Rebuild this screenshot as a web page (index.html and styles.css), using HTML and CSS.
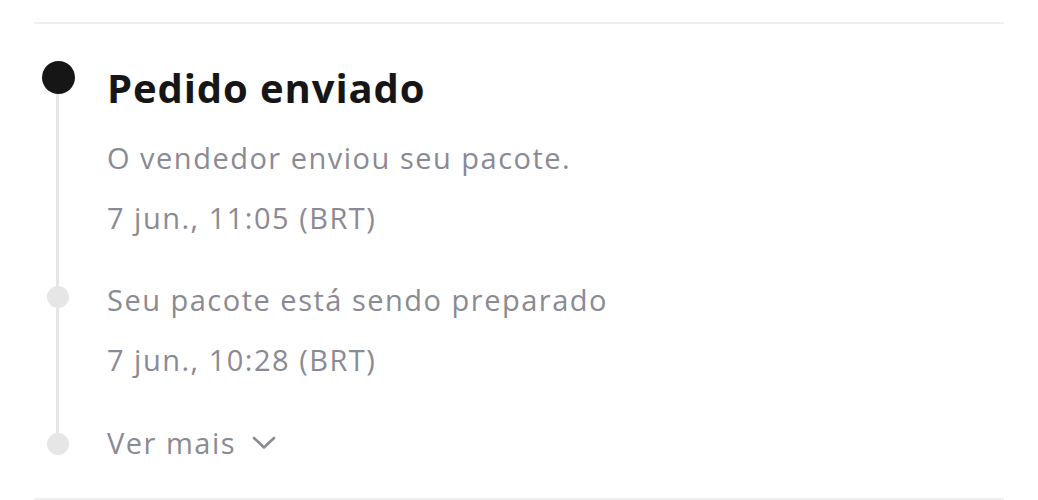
FILE: index.html
```html
<!DOCTYPE html>
<html lang="pt-BR">

<head>
  <title>rastreamento do pedido</title>
  <meta name="viewport" content="width=device-width, initial-scale=1" />
  <meta charset="UTF-8" />
  <link rel="stylesheet" href="styles.css">
</head>

<body>
  <section class="tracking">
    <ul class="timeline">
      <li class="step current">
        <span class="dot"></span>
        <div class="info">
          <h2 class="title">Pedido enviado</h2>
          <p class="text">O vendedor enviou seu pacote.</p>
          <p class="text">7 jun., 11:05 (BRT)</p>
        </div>
      </li>
      <li class="step">
        <span class="dot"></span>
        <div class="info">
          <p class="text">Seu pacote está sendo preparado</p>
          <p class="text">7 jun., 10:28 (BRT)</p>
        </div>
      </li>
      <li class="step more">
        <span class="dot"></span>
        <div class="info">
          <a class="see-more" href="#">Ver mais
            <svg width="24" height="14" viewBox="0 0 24 14">
              <path d="M2 2 L12 11.5 L22 2" fill="none" stroke="#8a8a94" stroke-width="2.6" stroke-linecap="round" stroke-linejoin="round" />
            </svg>
          </a>
        </div>
      </li>
    </ul>
  </section>
</body>

</html>
```

FILE: styles.css
```css
body {
  margin: 0;
  background-color: #ffffff;
  font-family: 'Open Sans', Lato, sans-serif;
}

.tracking {
  width: 970px;
  margin: 22px 0 0 34px;
  border-top: 2px solid #f0f0f0;
  border-bottom: 2px solid #f0f0f0;
  height: 474px;
}

.timeline {
  position: relative;
  list-style: none;
  margin: 0;
  padding: 40px 0 0 0;
}

/* the grey rail behind the dots */
.timeline::before {
  content: "";
  position: absolute;
  left: 22px;
  top: 56px;
  height: 364px;
  width: 3px;
  background-color: #e6e6e6;
}

.step {
  display: grid;
  grid-template-columns: 73px 1fr;
}

.dot {
  position: relative;
  width: 22px;
  height: 22px;
  margin: 16px 0 0 13px;
  border-radius: 50%;
  background-color: #e6e6e6;
}

.current .dot {
  width: 33px;
  height: 33px;
  margin: -3px 0 0 8px;
  background-color: #161616;
}

.more .dot {
  margin-top: 12px;
}

.title {
  margin: 0 0 16px 0;
  font-size: 40px;
  line-height: 48px;
  font-weight: 700;
  letter-spacing: 0.9px;
  color: #161616;
}

.text {
  margin: 0;
  font-size: 29px;
  line-height: 60px;
  letter-spacing: 1.5px;
  color: #8a8a94;
}

.current .info {
  padding-bottom: 22px;
}

.step + .step .info {
  padding-bottom: 31px;
}

.more .info {
  padding-bottom: 0;
}

.see-more {
  display: inline-flex;
  align-items: center;
  gap: 16px;
  font-size: 29px;
  line-height: 44px;
  letter-spacing: 1.5px;
  color: #8a8a94;
  text-decoration: none;
}
```
